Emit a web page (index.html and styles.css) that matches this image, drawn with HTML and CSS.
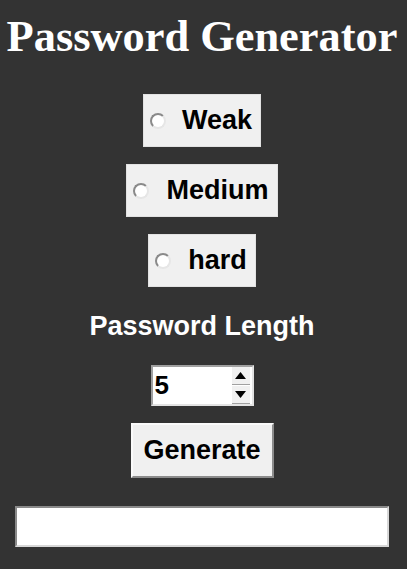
FILE: index.html
```html
<!DOCTYPE html>
<html>
<head>
<meta charset="utf-8">
<link rel="stylesheet" href="styles.css">
</head>
<body>
<div class="app">
  <h1 class="title">Password Generator</h1>
  <label class="choice choice-weak"><span class="radio"></span><span class="choice-text">Weak</span></label>
  <label class="choice choice-medium"><span class="radio"></span><span class="choice-text">Medium</span></label>
  <label class="choice choice-hard"><span class="radio"></span><span class="choice-text">hard</span></label>
  <div class="label">Password Length</div>
  <div class="spinbox">
    <span class="spin-value">5</span>
    <span class="spin-buttons">
      <span class="spin-btn"><svg width="11" height="7" viewBox="0 0 11 7"><polygon points="5.5,0 11,7 0,7" fill="#000"/></svg></span>
      <span class="spin-btn"><svg width="11" height="7" viewBox="0 0 11 7"><polygon points="0,0 11,0 5.5,7" fill="#000"/></svg></span>
    </span>
  </div>
  <div class="button">Generate</div>
  <div class="entry"></div>
</div>
</body>
</html>
```

FILE: styles.css
```css
html, body {
  margin: 0;
  padding: 0;
  background: #333333;
}
body {
  width: 407px;
  height: 569px;
  overflow: hidden;
  font-family: "Liberation Sans", Arial, sans-serif;
}
.app {
  width: 404px;
  display: flex;
  flex-direction: column;
  align-items: center;
}
.title {
  margin: 14px 0 0;
  font-family: "Liberation Serif", "Times New Roman", serif;
  font-weight: bold;
  font-size: 44.4px;
  line-height: 45px;
  color: #ffffff;
  white-space: nowrap;
}
.choice {
  box-sizing: border-box;
  height: 53px;
  display: flex;
  align-items: center;
  background: #f0f0f0;
  border: 1px solid #e2e2e2;
  padding: 0 8px 0 6px;
  color: #000;
  font-weight: bold;
  font-size: 27px;
}
.choice-weak { margin-top: 35px; }
.choice-medium { margin-top: 17px; }
.choice-hard { margin-top: 17px; }
.radio {
  box-sizing: border-box;
  width: 16px;
  height: 16px;
  border-radius: 50%;
  background: #ffffff;
  border: 2px solid;
  border-color: #8a8a8a #e6e6e6 #e6e6e6 #8a8a8a;
  margin-right: 16px;
  flex: none;
}
.choice-medium .radio,
.choice-hard .radio { margin-right: 17px; }
.label {
  margin-top: 24px;
  font-weight: bold;
  font-size: 27px;
  line-height: 30px;
  color: #ffffff;
}
.spinbox {
  box-sizing: border-box;
  margin-top: 24px;
  width: 103px;
  height: 41px;
  background: #ffffff;
  border: 2px solid;
  border-color: #a0a0a0 #e3e3e3 #e3e3e3 #a0a0a0;
  display: flex;
  align-items: stretch;
}
.spin-value {
  flex: 1;
  display: flex;
  align-items: center;
  padding-left: 2px;
  font-weight: bold;
  font-size: 26px;
  color: #000;
}
.spin-buttons {
  width: 18px;
  display: flex;
  flex-direction: column;
  gap: 1px;
  margin-right: 2px;
}
.spin-btn {
  flex: 1;
  display: flex;
  align-items: center;
  justify-content: center;
  background: #f0f0f0;
  border-bottom: 1px solid #a0a0a0;
}
.button {
  box-sizing: border-box;
  margin-top: 17px;
  width: 143px;
  height: 55px;
  display: flex;
  align-items: center;
  justify-content: center;
  background: #f0f0f0;
  border: 2px solid;
  border-color: #fafafa #8c8c8c #8c8c8c #fafafa;
  font-weight: bold;
  font-size: 27px;
  color: #000;
}
.entry {
  box-sizing: border-box;
  margin-top: 28px;
  width: 374px;
  height: 41px;
  background: #ffffff;
  border: 2px solid;
  border-color: #8a8a8a #d8d8d8 #d8d8d8 #8a8a8a;
}
```
